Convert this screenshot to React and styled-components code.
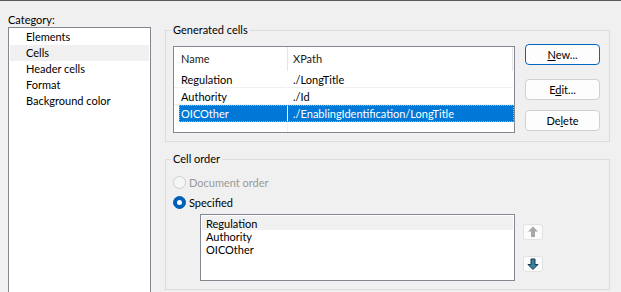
import React from "react";
import styled, { createGlobalStyle } from "styled-components";

const GlobalStyle = createGlobalStyle`
  html, body {
    margin: 0;
    background: #f0f0f0;
    overflow: hidden;
  }
  body {
    font-family: Lato, "Noto Sans", sans-serif;
    font-size: 11px;
    color: #000;
  }
`;

const Window = styled.div`
  box-sizing: border-box;
  height: 292px;
  border-top: 1px solid #595959;
  display: flex;
  gap: 14px;
  padding: 0 11px 0 8px;
  overflow: hidden;
`;

// left side
const LeftPane = styled.div`
  width: 143px;
  flex-shrink: 0;
  display: flex;
  flex-direction: column;
  padding-top: 10px;
`;

const PaneLabel = styled.div`
  height: 16px;
  line-height: 17px;
`;

const CategoryList = styled.div`
  flex: 1;
  margin-bottom: -10px;
  background: #fff;
  border: 1px solid #828790;
  padding: 1px;
`;

const CategoryItem = styled.div`
  height: 16px;
  line-height: 16px;
  padding-left: 16px;
  background: ${(p) => (p.$active ? "#f0f0f0" : "transparent")};
`;

// right side
const RightPane = styled.div`
  width: 445px;
  flex-shrink: 0;
  display: flex;
  flex-direction: column;
`;

const GroupBox = styled.fieldset`
  margin: ${(p) => p.$top}px 0 0 0;
  padding: 0;
  min-width: 0;
  border: 1px solid #dcdcdc;
`;

const Legend = styled.legend`
  margin-left: 5px;
  padding: 0 2px;
  line-height: 16px;
`;

const GroupBody = styled.div`
  display: flex;
  align-items: flex-start;
  padding: ${(p) => p.$pad};
`;

const Table = styled.div`
  box-sizing: border-box;
  width: 342px;
  height: 87px;
  flex-shrink: 0;
  margin-top: 8px;
  background: #fff;
  border: 1px solid #828790;
  display: flex;
  flex-direction: column;
`;

const HeaderRow = styled.div`
  display: flex;
  height: 24px;
`;

const HeaderCell = styled.div`
  width: ${(p) => p.$w}px;
  border-right: 1px solid #e5e5e5;
  padding-left: ${(p) => p.$pl}px;
  box-sizing: border-box;
  line-height: 24px;
  color: #1a1a1a;
`;

const Row = styled.div`
  display: flex;
  height: 17px;
`;

const Cell = styled.div`
  box-sizing: border-box;
  width: ${(p) => (p.$w ? `${p.$w}px` : "auto")};
  flex: ${(p) => (p.$w ? "none" : "1")};
  margin-right: 1px;
  padding-left: ${(p) => p.$pl}px;
  height: 17px;
  line-height: 17px;
  border-bottom: 1px solid #f0f0f0;
  white-space: nowrap;
  overflow: hidden;
`;

const Selection = styled.div`
  display: flex;
  flex: 1;
  margin-left: 5px;
  height: 17px;
  outline: 1px dotted #e9a54a;
  outline-offset: -1px;
`;

const SelCell = styled.div`
  box-sizing: border-box;
  width: ${(p) => (p.$w ? `${p.$w}px` : "auto")};
  flex: ${(p) => (p.$w ? "none" : "1")};
  margin-right: ${(p) => (p.$w ? "1px" : "0")};
  padding-left: ${(p) => p.$pl}px;
  background: #0078d7;
  color: #fff;
  line-height: 18px;
  white-space: nowrap;
  overflow: hidden;
`;

const FillerRow = styled.div`
  flex: 1;
  display: flex;
`;

const FillerCell = styled.div`
  width: 113px;
  border-right: 1px solid #f0f0f0;
`;

const ButtonColumn = styled.div`
  display: flex;
  flex-direction: column;
  margin-left: 10px;
  padding-top: 6px;
`;

const Button = styled.button`
  box-sizing: border-box;
  width: 75px;
  height: 21px;
  margin-top: ${(p) => p.$gap || 0}px;
  padding: 0;
  font: inherit;
  color: #000;
  background: #fdfdfd;
  border: 1px solid ${(p) => (p.$primary ? "#0067c0" : "#d0d0d0")};
  border-radius: 4px;
  line-height: 18px;
`;

const RadioRow = styled.div`
  display: flex;
  align-items: center;
  gap: 3px;
  height: 16px;
  margin-top: ${(p) => p.$gap}px;
  color: ${(p) => (p.$disabled ? "#9a9a9a" : "#000")};
`;

const RadioDot = styled.span`
  box-sizing: border-box;
  width: 13px;
  height: 13px;
  border-radius: 50%;
  flex-shrink: 0;
  display: flex;
  align-items: center;
  justify-content: center;
  border: 1px solid ${(p) => (p.$checked ? "#005fb8" : "#cfcfcf")};
  background: ${(p) => (p.$checked ? "#005fb8" : "#f6f6f6")};

  &::after {
    content: "";
    display: ${(p) => (p.$checked ? "block" : "none")};
    width: 5px;
    height: 5px;
    border-radius: 50%;
    background: #fff;
  }
`;

const OrderSection = styled.div`
  display: flex;
  flex-direction: column;
`;

const OrderRow = styled.div`
  display: flex;
  margin-top: 4px;
  padding-left: 27px;
`;

const OrderList = styled.div`
  box-sizing: border-box;
  width: 315px;
  height: 67px;
  background: #fff;
  border: 1px solid #828790;
  padding: 1px;
`;

const OrderItem = styled.div`
  height: 13px;
  line-height: 13px;
  padding-left: 4px;
  background: ${(p) => (p.$active ? "#f0f0f0" : "transparent")};
  &:first-child {
    height: 14px;
    line-height: 15px;
  }
`;

const ArrowColumn = styled.div`
  display: flex;
  flex-direction: column;
  margin-left: 8px;
  padding-top: 10px;
`;

const ArrowButton = styled.div`
  box-sizing: border-box;
  width: 20px;
  height: 16px;
  margin-top: ${(p) => p.$gap || 0}px;
  background: #fbfbfb;
  border: 1px solid #e2e2e2;
  border-radius: 3px;
  display: flex;
  align-items: center;
  justify-content: center;
`;

function ArrowIcon({ down }) {
  const pts = down
    ? "6,11.5 11,6.5 8,6.5 8,1 4,1 4,6.5 1,6.5"
    : "6,0.5 11,5.5 8,5.5 8,11 4,11 4,5.5 1,5.5";
  return (
    <svg width="12" height="12" viewBox="0 0 12 12">
      <polygon
        points={pts}
        fill={down ? "#3a7fa3" : "#a8a8a8"}
        stroke={down ? "#173a4e" : "none"}
        strokeWidth="1"
      />
    </svg>
  );
}

const categories = ["Elements", "Cells", "Header cells", "Format", "Background color"];

const cells = [
  { name: "Regulation", xpath: "./LongTitle" },
  { name: "Authority", xpath: "./Id" },
  { name: "OICOther", xpath: "./EnablingIdentification/LongTitle", selected: true },
];

export default function App() {
  return (
    <>
      <GlobalStyle />
      <Window>
        <LeftPane>
          <PaneLabel>Category:</PaneLabel>
          <CategoryList>
            {categories.map((c) => (
              <CategoryItem key={c} $active={c === "Cells"}>
                {c}
              </CategoryItem>
            ))}
          </CategoryList>
        </LeftPane>

        <RightPane>
          <GroupBox $top={21}>
            <Legend>Generated cells</Legend>
            <GroupBody $pad="0 10px 8px 7px">
              <Table>
                <HeaderRow>
                  <HeaderCell $w={114} $pl={7}>Name</HeaderCell>
                  <HeaderCell $w={225} $pl={5}>XPath</HeaderCell>
                </HeaderRow>
                {cells.map((c) =>
                  c.selected ? (
                    <Row key={c.name}>
                      <Selection>
                        <SelCell $w={108} $pl={2}>{c.name}</SelCell>
                        <SelCell $pl={5}>{c.xpath}</SelCell>
                      </Selection>
                    </Row>
                  ) : (
                    <Row key={c.name}>
                      <Cell $w={113} $pl={7}>{c.name}</Cell>
                      <Cell $pl={5}>{c.xpath}</Cell>
                    </Row>
                  )
                )}
                <FillerRow>
                  <FillerCell />
                </FillerRow>
              </Table>
              <ButtonColumn>
                <Button $primary>
                  <u>N</u>ew...
                </Button>
                <Button $gap={14}>
                  E<u>d</u>it...
                </Button>
                <Button $gap={10}>
                  De<u>l</u>ete
                </Button>
              </ButtonColumn>
            </GroupBody>
          </GroupBox>

          <GroupBox $top={9}>
            <Legend>Cell order</Legend>
            <GroupBody $pad="7px 10px 8px 7px">
              <OrderSection>
                <RadioRow $gap={0} $disabled>
                  <RadioDot />
                  Document order
                </RadioRow>
                <RadioRow $gap={4}>
                  <RadioDot $checked />
                  Specified
                </RadioRow>
                <OrderRow>
                  <OrderList>
                    <OrderItem $active>Regulation</OrderItem>
                    <OrderItem>Authority</OrderItem>
                    <OrderItem>OICOther</OrderItem>
                  </OrderList>
                  <ArrowColumn>
                    <ArrowButton>
                      <ArrowIcon />
                    </ArrowButton>
                    <ArrowButton $gap={16}>
                      <ArrowIcon down />
                    </ArrowButton>
                  </ArrowColumn>
                </OrderRow>
              </OrderSection>
            </GroupBody>
          </GroupBox>
        </RightPane>
      </Window>
    </>
  );
}
